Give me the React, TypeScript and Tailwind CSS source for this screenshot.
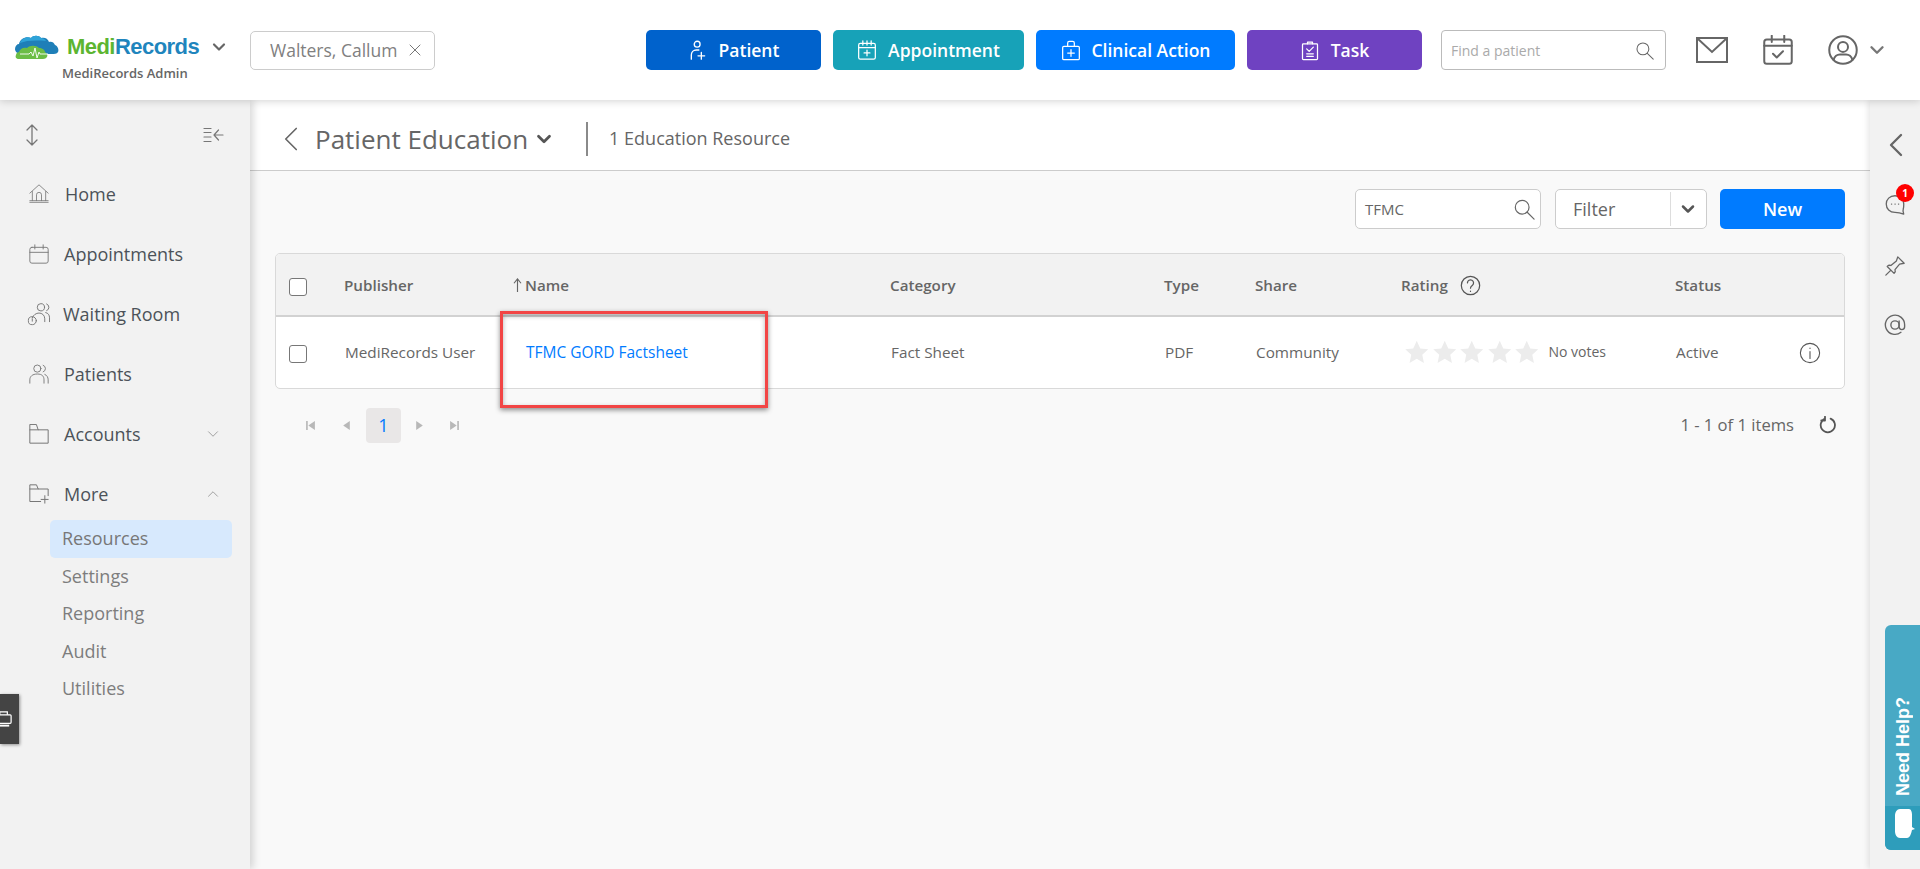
import React from "react";
import { ChevronDown, ChevronUp, ChevronLeft, X } from "lucide-react";

type IconProps = { className?: string };

// thin outline icons, same stroke look as the app's icon font
const Svg = ({ className, children, vb = "0 0 24 24", sw = 1.2 }: IconProps & { children: React.ReactNode; vb?: string; sw?: number }) => (
  <svg viewBox={vb} className={className} fill="none" stroke="currentColor" strokeWidth={sw} strokeLinecap="round" strokeLinejoin="round">
    {children}
  </svg>
);

const SearchIcon = ({ className }: IconProps) => (
  <Svg className={className} sw={1.3}>
    <circle cx="10" cy="10" r="7.5" />
    <path d="M15.5 15.5 23 23" />
  </Svg>
);

const PatientPlus = ({ className }: IconProps) => (
  <Svg className={className} sw={1.6}>
    <circle cx="11" cy="5" r="3.5" />
    <path d="M4 23v-5c0-3.5 2.5-6 6-6h3" />
    <path d="M16 15v8M12 19h8" />
  </Svg>
);

const CalendarPlus = ({ className }: IconProps) => (
  <Svg className={className} sw={1.5}>
    <rect x="2" y="4" width="20" height="19" rx="2" />
    <path d="M2 9h20M7 1v5M12 1v5M17 1v5M12 12v7M8.5 15.5h7" />
  </Svg>
);

const MedicalBag = ({ className }: IconProps) => (
  <Svg className={className} sw={1.5}>
    <rect x="2" y="7" width="20" height="16" rx="1.5" />
    <path d="M8 7V3a2 2 0 0 1 2-2h4a2 2 0 0 1 2 2v4M12 11v8M8 15h8" />
  </Svg>
);

const Clipboard = ({ className }: IconProps) => (
  <Svg className={className} sw={1.5}>
    <rect x="3" y="4" width="18" height="19" rx="1" />
    <path d="M9 4V2h6v2M8 10l3 3 5-5M8 16h8M8 19h8" />
  </Svg>
);

const Cloud = () => (
  <svg viewBox="0 0 46 26" className="w-[46px] h-[26px]">
    <path d="M1 15c0-3 2-5 4-5 1-5 7-8 12-6 2-3 8-3 10 0 3-1 7 0 8 4 2-1 5 0 6 3 3 1 4 5 3 7-1 2-4 2-6 2H8c-4 0-7-2-7-5z" fill="#1f7fb8" />
    <path d="M6 9c1-4 7-7 11-5 2-3 8-3 10 0 2 0 4 1 5 3-8-1-20-1-26 2z" fill="#2fa3d8" />
    <path d="M5 25c-3 0-4-2-3-4 0-2 2-3 3-3 1-3 4-5 8-4 3-3 9-3 12 0 3 0 6 2 6 4 2 1 3 3 2 5-1 1-2 2-4 2z" fill="#6cbd45" />
    <path d="M6 20h9l2-2 2 4 2-8 2 10 2-6 1 2h8" fill="none" stroke="#fff" strokeWidth="0.9" />
  </svg>
);

const SideIcons: Record<string, React.ReactNode> = {
  Home: (
    <Svg className="w-5 h-5" sw={1}>
      <path d="M1 11 12 1l11 10M4 9v11M20 9v11M9 20v-7a3 3 0 0 1 6 0v7M1 22h22M1 20h22" />
    </Svg>
  ),
  Appointments: (
    <Svg className="w-5 h-5" sw={1.1}>
      <rect x="1" y="4" width="22" height="19" rx="2.5" />
      <path d="M1 10h22M7 1v5M17 1v5" />
    </Svg>
  ),
  "Waiting Room": (
    <Svg className="w-[23px] h-[23px]" sw={1}>
      <circle cx="14" cy="5" r="3.8" />
      <path d="M20 1.5a3.8 3.8 0 0 1 0 7M23 20v-4c0-3-1.500-5-4-5.500M18 20v-3c0-4-3-6-6-6-3 0-6 2-7 5" />
      <circle cx="5" cy="19" r="4.200" />
      <path d="M5 17v2.500" />
    </Svg>
  ),
  Patients: (
    <Svg className="w-5 h-5" sw={1.1}>
      <circle cx="10" cy="5.500" r="4.300" />
      <path d="M17 1.500a4.300 4.300 0 0 1 0 8M1 23v-4c0-4 3-7 9-7s8 3 8 7v4M23 23v-4c0-3-1.500-5.500-4-6.500" />
    </Svg>
  ),
  Accounts: (
    <Svg className="w-[21px] h-5" sw={1.2}>
      <path d="M1 1v22h22V7H11L9 1zM1 7h10" />
    </Svg>
  ),
  More: (
    <Svg className="w-[21px] h-5" sw={1.2}>
      <path d="M14 21H1V1h8l2 5h12v8M1 6h10M19 14v9M14.500 18.500h8.500" />
    </Svg>
  ),
};

const navItems = [
  { name: "Home", pl: "pl-[65px]" },
  { name: "Appointments", pl: "pl-[64px]" },
  { name: "Waiting Room", pl: "pl-[63px]" },
  { name: "Patients", pl: "pl-[64px]" },
  { name: "Accounts", pl: "pl-[64px]", caret: "down" },
  { name: "More", pl: "pl-[64px]", caret: "up" },
];

const subItems = ["Resources", "Settings", "Reporting", "Audit", "Utilities"];

const actions = [
  { label: "Patient", bg: "bg-[#0062cc]", w: "w-[175px]", icon: <PatientPlus className="w-[20px] h-[20px]" /> },
  { label: "Appointment", bg: "bg-[#17a2b8]", w: "w-[191px]", icon: <CalendarPlus className="w-[20px] h-[20px]" /> },
  { label: "Clinical Action", bg: "bg-[#007bff]", w: "w-[199px]", icon: <MedicalBag className="w-[20px] h-[21px]" /> },
  { label: "Task", bg: "bg-[#6f42c1]", w: "w-[175px]", icon: <Clipboard className="w-[20px] h-[21px]" /> },
];

const Checkbox = () => <span className="block mt-[3px] w-[18px] h-[18px] rounded-[3px] border border-[#777] bg-white" />;

const Star = () => (
  <svg viewBox="0 0 24 24" className="w-[27.500px] h-[24px]" fill="#ececec">
    <path d="M12 0.800l3.500 7.600 8 .9-6 5.500 1.700 8.200-7.200-4.200-7.200 4.200 1.700-8.200-6-5.500 8-.9z" />
  </svg>
);

const PagerArrow = ({ d, className }: { d: string; className: string }) => (
  <svg viewBox="0 0 10 10" className={className} fill="#b8b8b8">
    <path d={d} />
  </svg>
);

const columns = "grid grid-cols-[69px_169px_377px_274px_91px_146px_274px_124px_1fr] items-center";

export default function App() {
  return (
    <div className="relative w-full h-[869px] overflow-hidden bg-[#f9f9f9] font-['Open_Sans',sans-serif] text-[#666]">
      {/* top bar */}
      <header className="relative z-20 h-[100px] bg-white flex items-center shadow-[0_1px_8px_rgba(0,0,0,0.18)]">
        <div className="w-[250px] shrink-0 flex flex-col pl-[14px] pt-[14px]">
          <div className="flex items-center h-[28px]">
            <Cloud />
            <span className="ml-[7px] text-[22px] leading-none font-bold tracking-[-0.55px] font-['Liberation_Sans',sans-serif]">
              <span className="text-[#5cb531]">Medi</span>
              <span className="text-[#1f85bd]">Records</span>
            </span>
            <ChevronDown className="ml-[10px] w-[20px] h-[20px] text-[#666]" strokeWidth={2.6} />
          </div>
          <div className="ml-[48px] mt-[3px] text-[13px] leading-[18px] font-semibold text-[#666]">MediRecords Admin</div>
        </div>
        <div className="w-[185px] h-[39px] shrink-0 border border-[#ccc] rounded-[5px] flex items-center pl-[19px] text-[17.500px] text-[#808080]">
          Walters, Callum
          <X className="ml-[8px] w-[20px] h-[20px] text-[#777]" strokeWidth={1.200} />
        </div>
        <div className="ml-[211px] flex gap-[12px]">
          {actions.map((a) => (
            <button key={a.label} className={`${a.bg} ${a.w} h-[40px] rounded-[5px] flex items-center justify-center gap-[11px] text-white text-[17.500px] font-semibold`}>
              {a.icon}
              {a.label}
            </button>
          ))}
        </div>
        <div className="ml-[19px] w-[225px] h-[40px] border border-[#bbb] rounded-[4px] flex items-center justify-between pl-[9px] pr-[11px] text-[14px] font-medium text-[#aaa]">
          Find a patient
          <SearchIcon className="w-[19px] h-[19px] text-[#666]" />
        </div>
        <svg viewBox="0 0 32 26" className="ml-[30px] w-[32px] h-[26px] text-[#666]" fill="none" stroke="currentColor" strokeWidth="2">
          <rect x="1" y="1" width="30" height="24" />
          <path d="m1 1 15 14L31 1" />
        </svg>
        <Svg className="ml-[35px] w-[30px] h-[30px] text-[#666]" sw={1.600}>
          <rect x="1" y="3.500" width="22" height="19.500" rx="2" />
          <path d="M1 8.500h22M7 .5v5M17 .5v5M8 15l3 3 5-5" />
        </Svg>
        <Svg className="ml-[35px] w-[30px] h-[30px] text-[#666]" sw={1.600}>
          <circle cx="12" cy="12" r="11" />
          <circle cx="12" cy="9.500" r="4" />
          <path d="M4.500 20c.5-3 3-4.500 5-4.500h5c2 0 4.500 1.500 5 4.500" />
        </Svg>
        <ChevronDown className="ml-[8px] w-[22px] h-[22px] text-[#777]" strokeWidth={2.600} />
      </header>

      <div className="flex h-[769px]">
        {/* left nav */}
        <aside className="relative z-10 w-[250px] shrink-0 bg-[#f2f2f2] shadow-[3px_0_8px_rgba(0,0,0,0.16)]">
          <div className="h-[64px] pt-[5px] flex items-center justify-between pl-[24px] pr-[26px] text-[#777]">
            <Svg className="w-[16px] h-[22px]" vb="0 0 16 22" sw={1.3}>
              <path d="M8 1v20M3 6l5-5 5 5M3 16l5 5 5-5" />
            </Svg>
            <Svg className="w-[21px] h-[16px]" vb="0 0 21 16" sw={1.200}>
              <path d="M1 1.500h7M1 5.500h7M1 10h7M1 14.500h7M20 8h-9M15.500 3 11 8l4.500 5" />
            </Svg>
          </div>
          <nav>
            {navItems.map((item) => (
              <div key={item.name} className={`relative h-[60px] flex items-center ${item.pl} text-[18px] text-[#4c5259]`}>
                <span className="absolute left-[39px] top-1/2 -translate-x-1/2 -translate-y-1/2 text-[#777]">{SideIcons[item.name]}</span>
                {item.name}
                {item.caret === "down" && <ChevronDown className="absolute right-[28px] w-[18px] h-[18px] text-[#999]" strokeWidth={1.2} />}
                {item.caret === "up" && <ChevronUp className="absolute right-[28px] w-[18px] h-[18px] text-[#999]" strokeWidth={1.2} />}
              </div>
            ))}
          </nav>
          <div className="pl-[50px] pr-[18px] -mt-[4px]">
            {subItems.map((s, i) => (
              <div key={s} className={`h-[37.500px] flex items-center pl-[12px] rounded-[5px] text-[18px] ${i === 0 ? "bg-[#d7e9fd] text-[#777]" : "text-[#7d7d7d]"}`}>
                {s}
              </div>
            ))}
          </div>
        </aside>

        {/* main content */}
        <main className="flex-1 min-w-0">
          <div className="h-[71px] pt-[7px] bg-white border-b border-[#ccc] flex items-center pl-[20px]">
            <ChevronLeft className="w-[42px] h-[42px] shrink-0 text-[#666]" strokeWidth={0.950} />
            <h1 className="ml-[3px] text-[26px] leading-none font-medium text-[#666]">Patient Education</h1>
            <ChevronDown className="ml-[5px] w-[22px] h-[22px] text-[#555]" strokeWidth={3} />
            <span className="ml-[31px] w-[2px] h-[34px] bg-[#8a8a8a]" />
            <span className="ml-[21px] text-[18px] font-medium text-[#666]">1 Education Resource</span>
          </div>

          <div className="pl-[25px] pr-[25px]">
            <div className="pt-[18px] flex justify-end">
              <div className="w-[186px] h-[40px] bg-white border border-[#ccc] rounded-[5px] flex items-center justify-between pl-[9px] pr-[5px] text-[15px] text-[#666]">
                TFMC
                <SearchIcon className="w-[22px] h-[22px] text-[#666]" />
              </div>
              <div className="ml-[14px] w-[152px] h-[40px] bg-white border border-[#ccc] rounded-[5px] flex items-center pl-[17px] text-[18px] font-medium text-[#666]">
                <span className="w-[97px]">Filter</span>
                <span className="w-px h-[34px] bg-[#ddd]" />
                <ChevronDown className="ml-[7px] w-[20px] h-[20px] text-[#555]" strokeWidth={3} />
              </div>
              <button className="ml-[13px] w-[125px] h-[40px] bg-[#007bff] rounded-[5px] text-white text-[18px] font-semibold">New</button>
            </div>

            <div className="mt-[24px] border border-[#d9d9d9] rounded-[5px] bg-white overflow-hidden">
              <div className={`${columns} h-[63px] pt-[2px] bg-[#f2f2f2] border-b-2 border-[#d2d2d2] text-[15.200px] font-semibold text-[#666] -ml-px`}>
                <span className="pl-[14px]"><Checkbox /></span>
                <span>Publisher</span>
                <span className="flex items-center">
                  <svg viewBox="0 0 10 16" className="w-[9px] h-[14px]" fill="none" stroke="#666" strokeWidth="1.300">
                    <path d="M5 16V1M1 6l4-5 4 5" />
                  </svg>
                  <span className="ml-[3px]">Name</span>
                </span>
                <span>Category</span>
                <span>Type</span>
                <span>Share</span>
                <span className="flex items-center gap-[12px]">
                  Rating
                  <Svg className="w-[21px] h-[21px] text-[#555]" sw={1.400}>
                    <circle cx="12" cy="12" r="10.500" />
                    <path d="M8.500 9a3.500 3.500 0 1 1 5.500 3c-1.300.9-2 1.500-2 3M12 18.500v.3" />
                  </Svg>
                </span>
                <span>Status</span>
                <span />
              </div>
              <div className={`${columns} h-[71px] text-[15.300px] font-medium text-[#666] -ml-px`}>
                <span className="pl-[14px]"><Checkbox /></span>
                <span className="pl-px">MediRecords User</span>
                <span className="pl-[13px] text-[15.500px] font-medium text-[#007bff]">TFMC GORD Factsheet</span>
                <span className="pl-px">Fact Sheet</span>
                <span className="pl-px">PDF</span>
                <span className="pl-px">Community</span>
                <span className="flex items-center pl-[2px] -mt-[2px]">
                  <Star /><Star /><Star /><Star /><Star />
                  <span className="ml-[8px] text-[14px]">No votes</span>
                </span>
                <span className="pl-px">Active</span>
                <Svg className="w-[22px] h-[22px] text-[#555]" sw={1.200}>
                  <circle cx="12" cy="12" r="10.500" />
                  <path d="M12 10.500V18M12 6.500v.5" />
                </Svg>
              </div>
            </div>

            <div className="mt-[18px] h-[36px] flex items-center text-[#666]">
              <PagerArrow d="M1 1h1.500v8H1zM9 1v8L3 5z" className="ml-[30px] w-[11px] h-[11px]" />
              <PagerArrow d="M8 1v8L2 5z" className="ml-[25px] w-[11px] h-[11px]" />
              <span className="ml-[14px] w-[35px] h-[35px] bg-[#e9e7e7] rounded-[4px] flex items-center justify-center text-[18px] text-[#007bff]">1</span>
              <PagerArrow d="M2 1v8l6-4z" className="ml-[13px] w-[11px] h-[11px]" />
              <PagerArrow d="M1 1v8l6-4zM7.500 1H9v8H7.500z" className="ml-[24px] w-[11px] h-[11px]" />
              <span className="ml-auto text-[16.600px] font-medium">1 - 1 of 1 items</span>
              <Svg className="ml-[25px] mr-[8px] w-[18px] h-[18px] text-[#555]" sw={2.400}>
                <path d="M15.500 3.500a9.500 9.500 0 1 1-7.500 0M8 1v5H3" />
              </Svg>
            </div>
          </div>
        </main>

        {/* right rail */}
        <aside className="relative z-10 w-[50px] shrink-0 bg-[#f2f2f2] shadow-[-2px_0_6px_rgba(0,0,0,0.1)] flex flex-col items-center text-[#666]">
          <ChevronLeft className="mt-[25px] w-[40px] h-[40px] ml-[2px]" strokeWidth={1.400} />
          <div className="relative mt-[29px]">
            <Svg className="w-[22px] h-[21px]" sw={1.500}>
              <path d="M12 2C6 2 2 6 2 11.500S6 21 12 21c3 0 5 0 10 2-1-3-1-5-.5-6 .5-1.500.5-3 .5-5.500C22 6 18 2 12 2z" />
              <path d="M8 11.500h.2M12 11.500h.2M16 11.500h.2" />
            </Svg>
            <span className="absolute -top-[10px] left-[12px] w-[18px] h-[18px] rounded-full bg-[#f00] text-white text-[10px] font-bold flex items-center justify-center">1</span>
          </div>
          <Svg className="mt-[40px] w-[22px] h-[22px]" sw={1.400}>
            <path d="M15 2l7 7-5 1-5 6c1 2 0 3-1 4L3.500 12.500c1-1 2-2 4-1l6-5zM7 17l-5 5" />
          </Svg>
          <Svg className="mt-[37px] w-[22px] h-[22px]" sw={1.500}>
            <circle cx="12" cy="12" r="4.500" />
            <path d="M16.500 7.500V14a3 3 0 0 0 6 0v-2a10.500 10.500 0 1 0-4 8" />
          </Svg>
        </aside>
      </div>

      {/* device tab */}
      <div className="absolute z-30 left-0 top-[694px] w-[19px] h-[50px] bg-[#444] shadow-[1px_1px_3px_rgba(0,0,0,0.4)] flex items-center overflow-hidden">
        <svg viewBox="0 0 18 18" className="w-[17px] h-[17px] shrink-0 -ml-[4px]" fill="none" stroke="#fff" strokeWidth="1.300">
          <path d="M4 4V1h8v3" />
          <rect x="1" y="4" width="15" height="9" rx="1" />
          <path d="M0 15.500h14" strokeWidth="2" />
        </svg>
      </div>

      {/* need help */}
      <div className="absolute z-30 right-0 top-[625px] w-[35px] h-[225px] rounded-l-[6px] overflow-hidden flex flex-col bg-[#48a9c5] text-white">
        <div className="flex-1 flex items-start justify-center pt-[72px]">
          <span className="[writing-mode:vertical-rl] rotate-180 text-[18px] leading-none font-bold font-['Liberation_Sans',sans-serif] whitespace-nowrap">Need Help?</span>
        </div>
        <div className="h-[44px] bg-[#2e9dbb] flex items-start pt-[3px] pl-[10px]">
          <svg viewBox="0 0 20 29" className="w-[20px] h-[29px]" fill="#fff">
            <path d="M5 0h9c2 0 3 3 3 6v12l3 2-3 1c-1 4-2 8-5 8H5c-3 0-5-3-5-7V7c0-4 2-7 5-7z" />
          </svg>
        </div>
      </div>

      {/* red highlight box from the annotated screenshot */}
      <div className="absolute z-30 left-[500px] top-[311px] w-[268px] h-[97px] border-[3px] border-[#f24545] shadow-[0_2px_5px_rgba(0,0,0,0.45),inset_0_2px_5px_rgba(0,0,0,0.3)]" />
    </div>
  );
}
